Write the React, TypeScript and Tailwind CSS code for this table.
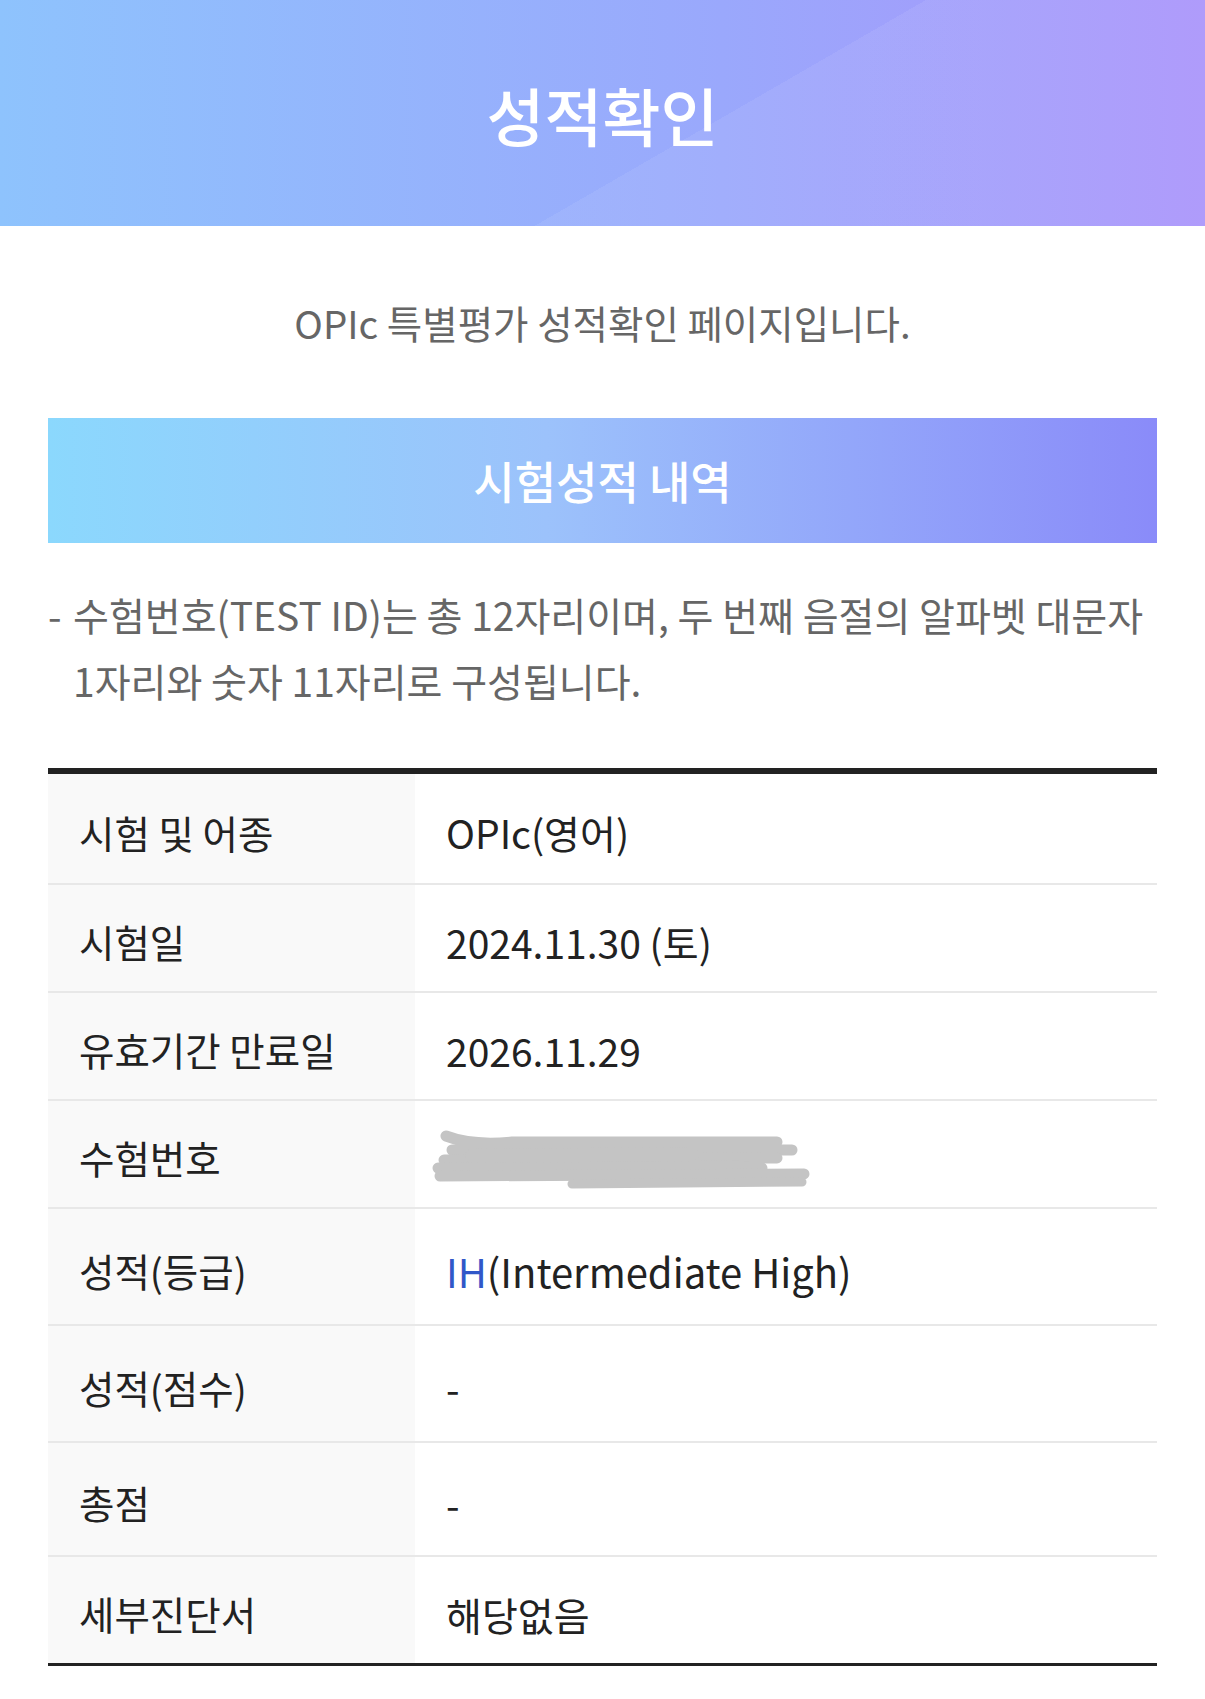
import React from 'react';

const font = "font-['Noto_Sans_CJK_KR','Noto_Sans',sans-serif]";

interface ScoreRow {
  label: string;
  value: React.ReactNode;
  height: string;
}

function RedactedId() {
  return (
    <svg width="390" height="64" viewBox="0 0 390 64" className="-ml-[14px] mt-[4px]">
      <path d="M22 40 L34 18" stroke="#222" strokeWidth="3" fill="none" />
      <path d="M28 16 Q40 10 48 16" stroke="#222" strokeWidth="3" fill="none" />
      <path d="M270 18 L290 16" stroke="#222" strokeWidth="3" fill="none" />
      <g stroke="#c4c4c4" strokeLinecap="round" fill="none">
        <path d="M14 8 Q40 18 80 14 L345 14" strokeWidth="11" />
        <path d="M20 22 L360 22" strokeWidth="11" />
        <path d="M12 32 L345 30" strokeWidth="11" />
        <path d="M6 40 L300 38 L330 40" strokeWidth="11" />
        <path d="M8 48 L372 46" strokeWidth="11" />
        <path d="M140 56 L370 54" strokeWidth="9" />
        <path d="M40 28 L260 26" strokeWidth="14" />
      </g>
    </svg>
  );
}

const rows: ScoreRow[] = [
  { label: '시험 및 어종', value: 'OPIc(영어)', height: 'h-[111px]' },
  { label: '시험일', value: '2024.11.30 (토)', height: 'h-[108px]' },
  { label: '유효기간 만료일', value: '2026.11.29', height: 'h-[108px]' },
  { label: '수험번호', value: <RedactedId />, height: 'h-[108px]' },
  {
    label: '성적(등급)',
    value: (
      <span className="text-[40px]">
        <span className="text-[#3157c8]">IH</span>(Intermediate High)
      </span>
    ),
    height: 'h-[117px]',
  },
  { label: '성적(점수)', value: '-', height: 'h-[117px]' },
  { label: '총점', value: '-', height: 'h-[114px]' },
  { label: '세부진단서', value: '해당없음', height: 'h-[106px]' },
];

export default function App() {
  return (
    <div className={`min-h-[1699px] w-full bg-white ${font}`}>
      <header className="flex h-[226px] items-center justify-center bg-[linear-gradient(150deg,transparent_58%,rgba(255,255,255,0.07)_58%),linear-gradient(90deg,#8ec3fd_0%,#9aa8fc_60%,#a994fb_100%)]">
        <h1 className="text-[63px] font-medium leading-none text-white">성적확인</h1>
      </header>

      <p className="mt-[72px] text-center text-[38.5px] leading-[48px] text-[#666]">
        OPIc 특별평가 성적확인 페이지입니다.
      </p>

      <div className="mx-[48px] mt-[72px]">
        <div className="flex h-[125px] items-center justify-center bg-[linear-gradient(90deg,#8bd8fd_0%,#9cc2fb_45%,#8a8bf9_100%)]">
          <h2 className="text-[45px] font-medium text-white">시험성적 내역</h2>
        </div>

        <div className="mt-[38px] flex text-[39px] leading-[66px] text-[#666]">
          <span className="w-[25px] shrink-0">-</span>
          <p className="break-keep">
            수험번호(TEST ID)는 총 12자리이며, 두 번째 음절의 알파벳 대문자 1자리와 숫자 11자리로 구성됩니다.
          </p>
        </div>

        <div className="mt-[55px] border-t-[6px] border-b-[3px] border-[#222]">
          {rows.map((row, index) => (
            <div
              key={row.label}
              className={`flex ${row.height} ${index < rows.length - 1 ? 'border-b-2 border-[#e8e8e8]' : ''}`}
            >
              <div className="flex w-[367px] shrink-0 items-center bg-[#f9f9f9] pl-[31px] pt-[8px] text-[38.5px] text-[#222]">
                {row.label}
              </div>
              <div className="flex flex-1 items-center pl-[31px] pt-[8px] text-[39px] text-[#222]">
                {row.value}
              </div>
            </div>
          ))}
        </div>
      </div>
    </div>
  );
}
